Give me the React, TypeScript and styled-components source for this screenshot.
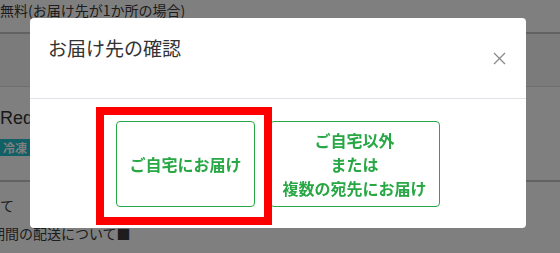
import React from 'react'
import styled, { createGlobalStyle } from 'styled-components'

const GlobalStyle = createGlobalStyle`
  html, body {
    margin: 0;
    padding: 0;
    width: 560px;
    height: 253px;
    overflow: hidden;
    background: #fff;
    font-family: 'Noto Sans CJK JP', 'Noto Sans', sans-serif;
    color: #333;
  }
`

const green = '#28a745'

const App: React.FC = () => (
  <>
    <GlobalStyle />
    <Page>
      <TopRow>
        <PageText>無料(お届け先が1か所の場合)</PageText>
      </TopRow>
      <ShadeRow />
      <ItemRow>
        <ItemName>Red Cabbage</ItemName>
        <Badge>冷凍</Badge>
      </ItemRow>
      <NoteRow>
        <PageText>て</PageText>
        <CutText>期間の配送について■</CutText>
      </NoteRow>
    </Page>
    <Backdrop />
    <Modal>
      <Header>
        <Title>お届け先の確認</Title>
        <CloseButton aria-label="閉じる">
          <svg width="13" height="13" viewBox="0 0 13 13">
            <path d="M1 1 L12 12 M12 1 L1 12" stroke="#8a8a8a" strokeWidth="1.3" fill="none" />
          </svg>
        </CloseButton>
      </Header>
      <Body>
        <Highlighted>
          <ChoiceButton>ご自宅にお届け</ChoiceButton>
          <RedFrame />
        </Highlighted>
        <ChoiceButton>
          ご自宅以外
          <br />
          または
          <br />
          複数の宛先にお届け
        </ChoiceButton>
      </Body>
    </Modal>
  </>
)

const Page = styled.div`
  width: 560px;
  height: 253px;
  display: flex;
  flex-direction: column;
`

const TopRow = styled.div`
  height: 32px;
  border-bottom: 2px solid #c4c4c4;
`

const PageText = styled.div`
  font-size: 14px;
  line-height: 20px;
  color: #3a3a3a;
  white-space: nowrap;
`

const ShadeRow = styled.div`
  height: 52px;
  background: #f6f6f6;
  border-bottom: 1px solid #dcdcdc;
`

const ItemRow = styled.div`
  height: 74px;
  padding-top: 19px;
  border-bottom: 2px solid #c4c4c4;
`

const ItemName = styled.div`
  font-family: 'Liberation Sans', 'Noto Sans CJK JP', sans-serif;
  font-size: 18px;
  line-height: 24px;
  color: #333;
`

const Badge = styled.span`
  display: inline-block;
  margin-top: 9px;
  padding: 0 3px;
  background: #23c0cc;
  color: #fff;
  font-size: 12px;
  font-weight: bold;
  line-height: 17px;
`

const NoteRow = styled.div`
  padding-top: 13px;
  display: flex;
  flex-direction: column;
  gap: 8px;
`

const CutText = styled(PageText)`
  margin-left: -9px;
`

const Backdrop = styled.div`
  position: fixed;
  inset: 0;
  background: rgba(0, 0, 0, 0.5);
`

const Modal = styled.div`
  position: fixed;
  left: 30px;
  top: 18px;
  width: 496px;
  background: #fff;
  border-radius: 4px;
  display: flex;
  flex-direction: column;
`

const Header = styled.div`
  box-sizing: border-box;
  height: 81px;
  padding: 15px 20px 0 18px;
  display: flex;
  justify-content: space-between;
  border-bottom: 1px solid #dee2e6;
`

const Title = styled.h5`
  margin: 0;
  font-size: 19px;
  font-weight: normal;
  line-height: 30px;
  color: #333;
`

const CloseButton = styled.button`
  align-self: center;
  margin-top: -15px;
  padding: 0;
  border: none;
  background: none;
  display: flex;
`

const Body = styled.div`
  padding: 22px 0 21px;
  display: flex;
  justify-content: center;
  gap: 15px;
`

const Highlighted = styled.div`
  position: relative;
  display: flex;
`

const ChoiceButton = styled.button`
  display: flex;
  align-items: center;
  justify-content: center;
  padding: 6px 12px;
  border: 1px solid ${green};
  border-radius: 4px;
  background: #fff;
  color: ${green};
  font-family: 'Noto Sans CJK JP', sans-serif;
  font-size: 16px;
  font-weight: bold;
  line-height: 24px;
  text-align: center;
`

const RedFrame = styled.div`
  position: absolute;
  top: -14px;
  left: -20px;
  right: -17px;
  bottom: -18px;
  border: 8px solid #ff0000;
  pointer-events: none;
`

export default App
